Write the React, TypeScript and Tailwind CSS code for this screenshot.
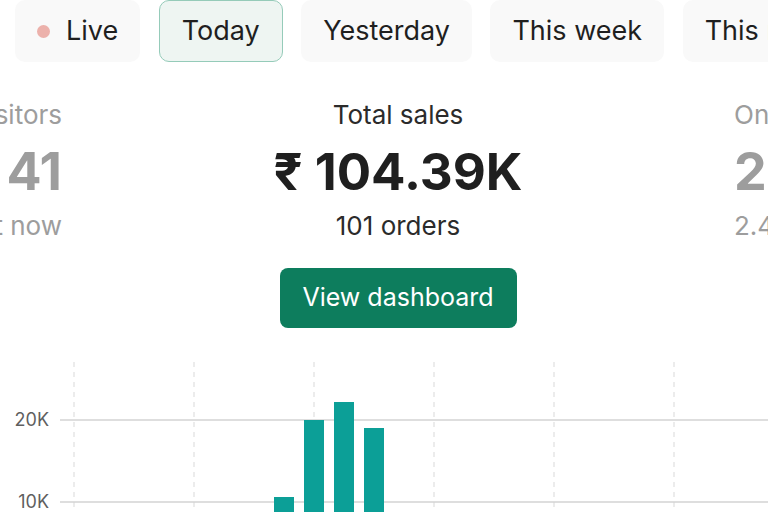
import React from 'react';

const tabs = [
  { label: 'Live', live: true },
  { label: 'Today', active: true },
  { label: 'Yesterday' },
  { label: 'This week' },
  { label: 'This month' },
];

const bars = [
  { x: 274, top: 157 },
  { x: 304, top: 80 },
  { x: 334, top: 62 },
  { x: 364, top: 88 },
];

const gridX = [74, 194, 314, 434, 554, 674];

const Tabs: React.FC = () => (
  <div className="flex gap-[18.5px] pl-[15px] whitespace-nowrap">
    {tabs.map((t) => (
      <div
        key={t.label}
        className={`shrink-0 h-[62px] flex items-center gap-4 px-[22px] rounded-[10px] text-[27px] text-[#1f1f1f] ${
          t.active ? 'bg-[#eef5f2] border-[1.5px] border-[#95cbb9] px-[21px]' : 'bg-[#f9f9f9]'
        }`}
      >
        {t.live && <span className="w-[13px] h-[13px] rounded-full bg-[#ecb1ab]" />}
        <span>{t.label}</span>
      </div>
    ))}
  </div>
);

const Stats: React.FC = () => (
  <div className="flex mt-[37px] whitespace-nowrap">
    {/* Left card, mostly scrolled out */}
    <div className="shrink-0 w-[62px] flex flex-col items-end text-[#9d9d9d]">
      <div className="text-[26px] leading-8">Visitors</div>
      <div className="text-[52px] font-bold leading-[60px] mt-[11px]">41</div>
      <div className="text-[26px] leading-8 mt-2">right now</div>
    </div>

    {/* Current card */}
    <div className="shrink-0 w-[672px] flex flex-col items-center">
      <div className="text-[26px] leading-8 text-[#2b2b2b]">Total sales</div>
      <div className="text-[51px] font-bold leading-[60px] mt-[11px] text-[#1f1f1f]">₹ 104.39K</div>
      <div className="text-[26px] leading-8 mt-2 text-[#2b2b2b]">101 orders</div>
      <button className="mt-[26px] h-[60px] w-[237px] rounded-lg bg-[#0d7d5d] text-white text-[25px]">
        View dashboard
      </button>
    </div>

    {/* Right card, mostly scrolled out */}
    <div className="shrink-0 flex flex-col items-start text-[#9d9d9d]">
      <div className="text-[26px] leading-8">Online sessions</div>
      <div className="text-[52px] font-bold leading-[60px] mt-[11px]">2.5K</div>
      <div className="text-[26px] leading-8 mt-2">2.4K visitors</div>
    </div>
  </div>
);

const Chart: React.FC = () => (
  <svg width="768" height="200" className="block mt-[12px]">
    {gridX.map((x) => (
      <line key={x} x1={x} y1={22} x2={x} y2={200} stroke="#d9d9d9" strokeWidth="1" strokeDasharray="5 5" />
    ))}
    <line x1={60} y1={80} x2={768} y2={80} stroke="#d3d3d3" strokeWidth="1.5" />
    <line x1={60} y1={162} x2={768} y2={162} stroke="#d3d3d3" strokeWidth="1.5" />
    <text x={49} y={86} textAnchor="end" fontSize="18" fill="#5f5f5f">20K</text>
    <text x={49} y={168} textAnchor="end" fontSize="18" fill="#5f5f5f">10K</text>
    {bars.map((b) => (
      <rect key={b.x} x={b.x} y={b.top} width={20} height={200 - b.top} fill="#0c9f97" />
    ))}
  </svg>
);

export default function App() {
  return (
    <div className="w-[768px] h-[512px] overflow-hidden bg-white font-['Inter',sans-serif]">
      <Tabs />
      <Stats />
      <Chart />
    </div>
  );
}
